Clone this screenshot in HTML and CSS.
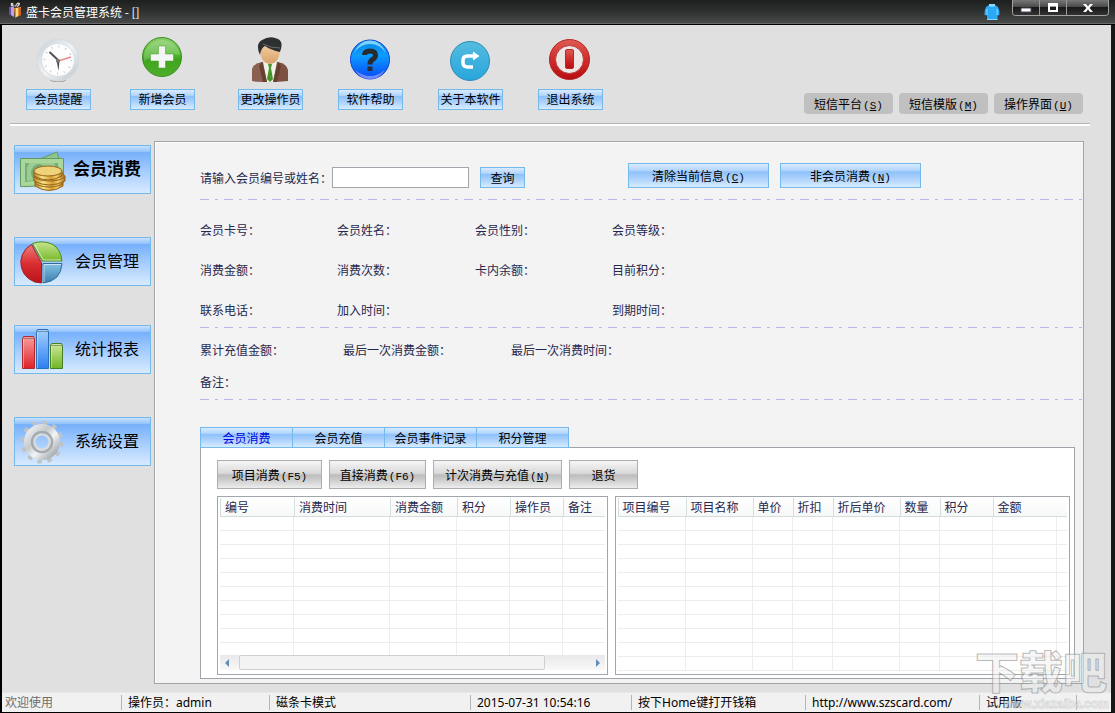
FILE: index.html
```html
<!DOCTYPE html>
<html lang="zh-CN">
<head>
<meta charset="utf-8">
<title>盛卡会员管理系统</title>
<link rel="stylesheet" href="styles.css">
</head>
<body>
<header class="titlebar">
  <svg class="app-icon" width="14" height="18" viewBox="0 0 14 18"><path d="M3 5Q2 1 5 2L7 5Q9 0 12 2Q12 5 9 6Z" fill="#d8d8d8"/><path d="M5 3l2 3M10 3L8 6" stroke="#444"/><path d="M1 6L5 5V16L1 13Z" fill="#6c4bb0"/><path d="M3 6L6 5.500V16L3 14Z" fill="#b9a4dc"/><path d="M6 7L13 6V14L7 17Z" fill="#e8862a"/><path d="M8 7L10 7V15L8 16Z" fill="#ffd98a"/><path d="M12 7V14" stroke="#b5421b"/></svg>
  <h1 class="title">盛卡会员管理系统 - []</h1>
  <svg class="shirt" width="16" height="17" viewBox="0 0 16 17"><path d="M5 1H11L14 3Q16 7 15.500 11L13.500 11.500V16H3V11.500L.5 11Q0 7 2 3Z" fill="#2aa9f5"/><path d="M5 0H11V2Q8 4 5 2Z" fill="#8ad4ff"/><path d="M3 5V11M13.200 5V11" stroke="#8ed5ff"/><path d="M3 15.500H13.500" stroke="#8ed5ff"/></svg>
  <div class="controls">
    <button class="ctl" aria-label="最小化"><svg width="12" height="12" viewBox="0 0 12 12"><path d="M1 6H11V10H1Z" fill="#fff" stroke="#444b5a"/></svg></button>
    <button class="ctl" aria-label="最大化"><svg width="12" height="12" viewBox="0 0 12 12"><path d="M2 2H10V9H2Z" fill="none" stroke="#fff" stroke-width="2"/><path d="M2 3H10" stroke="#fff" stroke-width="3"/></svg></button>
    <button class="ctl ctl-close" aria-label="关闭"><svg width="12" height="12" viewBox="0 0 12 12"><path d="M1 2H4L6 4.500L8 2H11L7.600 6L11 10H8L6 7.500L4 10H1L4.400 6Z" fill="#fff"/></svg></button>
  </div>
</header>

<div class="window">
  <div class="toolbar">
    <button class="tool">
      <svg width="47" height="48" viewBox="0 0 47 48"><defs><linearGradient id="ring" x1="0" y1="0" x2="1" y2="1"><stop offset="0" stop-color="#c3ccd4"/><stop offset="0.500" stop-color="#f1f4f6"/><stop offset="1" stop-color="#bac3ca"/></linearGradient></defs><ellipse cx="23" cy="44" rx="8" ry="2" fill="#999"/><circle cx="23" cy="24" r="21" fill="url(#ring)" stroke="#d5dbdf"/><circle cx="23" cy="24" r="16.500" fill="#fdfdfd" stroke="#d7dde2"/><circle cx="23" cy="24" r="13.500" fill="none" stroke="#c4c8cc" stroke-width="2" stroke-dasharray="1 6.070"/><path d="M14.500 16L23 24" stroke="#555" stroke-width="2"/><path d="M21.500 24H24.500L23.500 35Z" fill="#444"/><path d="M23 25L36 21" stroke="#e98c88" stroke-width="1.500"/><circle cx="23" cy="25" r="2" fill="#777"/></svg>
      <span class="tool-label">会员提醒</span>
    </button>
    <button class="tool">
      <svg width="47" height="48" viewBox="0 0 47 48"><defs><linearGradient id="green" x1="0" y1="0" x2="0" y2="1"><stop offset="0" stop-color="#8bd06a"/><stop offset="0.450" stop-color="#4fb52c"/><stop offset="0.550" stop-color="#3ea51c"/><stop offset="1" stop-color="#4fae2a"/></linearGradient></defs><circle cx="23" cy="21" r="19.500" fill="url(#green)" stroke="#3c8e22"/><path d="M5 19Q8 5 23 4Q38 5 41 19Q23 15 5 25Z" fill="#fff" opacity=".2"/><path d="M19.500 10H26.500V18H34.500V25H26.500V32H19.500V25H11.500V18H19.500Z" fill="#f4f6f3" stroke="#49983a" stroke-width=".5"/></svg>
      <span class="tool-label">新增会员</span>
    </button>
    <button class="tool tool-wide">
      <svg width="47" height="48" viewBox="1 0 47 48"><defs><linearGradient id="skin" x1="0" y1="0" x2="0" y2="1"><stop offset="0" stop-color="#f5d2a4"/><stop offset="1" stop-color="#d8a36b"/></linearGradient></defs><path d="M6 45V34Q7 28 16 26H32Q41 28 42 34V45Q24 47 6 45Z" fill="#7c5140"/><path d="M6 45V34Q7 28 14 27L18 46Z" fill="#8c6050"/><path d="M17 26H31L27 46H21Z" fill="#eef3e8"/><path d="M22 28H26L25 32L27 43L24 46L21 43L23 32Z" fill="#47952a"/><path d="M16 26L21 46H17L13 30ZM32 26L27 46H31L35 30Z" fill="#674032"/><path d="M14 12Q14 27 24 28Q34 27 34 12L28 6H18Z" fill="url(#skin)"/><path d="M14 19Q9 8 16 4Q24-1 32 3Q38 6 34 16Q25 14 19 10Q15 12 14 19Z" fill="#2d3031"/><path d="M17 8Q24 12 34 12" stroke="#6a6d6e" fill="none"/></svg>
      <span class="tool-label">更改操作员</span>
    </button>
    <button class="tool">
      <svg width="47" height="48" viewBox="1 0 47 48"><defs><linearGradient id="blue" x1="0" y1="0" x2="0" y2="1"><stop offset="0" stop-color="#0a86e2"/><stop offset="0.400" stop-color="#0c9cff"/><stop offset="1" stop-color="#0947f5"/></linearGradient></defs><circle cx="24" cy="23.500" r="19.500" fill="url(#blue)" stroke="#1240d0"/><path d="M8 17Q14 4 24 4.500Q34 4 40 17Q34 8 24 8Q14 8 8 17Z" fill="#7ad2ff"/><path d="M9 34Q24 46 39 34Q34 43 24 43Q14 43 9 34Z" fill="#6f8bff"/><path d="M18.500 19Q18.500 15 24 15Q29.500 15 29.500 19Q29.500 22 26.500 23.500Q24 25 24 28.500" stroke="#282c30" stroke-width="5" fill="none"/><path d="M21.500 30.500H26.500V35H21.500Z" fill="#282c30"/></svg>
      <span class="tool-label">软件帮助</span>
    </button>
    <button class="tool">
      <svg width="47" height="48" viewBox="1 0 47 48"><defs><linearGradient id="cyan" x1="0" y1="0" x2="0" y2="1"><stop offset="0" stop-color="#55bbdf"/><stop offset="1" stop-color="#28a6dc"/></linearGradient></defs><circle cx="24" cy="25" r="19.500" fill="url(#cyan)" stroke="#2d8db8"/><path d="M27 31H21.500Q17 31 17 26.500V24.500Q17 20 21.500 20H28" stroke="#fff" stroke-width="3.500" fill="none"/><path d="M27 15.500L33.500 20L27 24.500Z" fill="#fff"/></svg>
      <span class="tool-label">关于本软件</span>
    </button>
    <button class="tool">
      <svg width="47" height="48" viewBox="1 0 47 48"><defs><linearGradient id="red" x1="0" y1="0" x2="0" y2="1"><stop offset="0" stop-color="#e05a55"/><stop offset="0.500" stop-color="#d02c2b"/><stop offset="1" stop-color="#b80d10"/></linearGradient></defs><circle cx="23.500" cy="23.500" r="20" fill="url(#red)" stroke="#b12422"/><circle cx="23.500" cy="23.500" r="14" fill="#eee6e5" stroke="#b03535"/><rect x="19.500" y="13.500" width="8" height="19" rx="1.500" fill="url(#red)" stroke="#b32a29"/></svg>
      <span class="tool-label">退出系统</span>
    </button>
    <div class="toolbar-right">
      <button class="pill">短信平台<span class="key">(<u>S</u>)</span></button>
      <button class="pill">短信模版<span class="key">(<u>M</u>)</span></button>
      <button class="pill">操作界面<span class="key">(<u>U</u>)</span></button>
    </div>
  </div>

  <div class="body">
    <nav class="side">
      <button class="side-btn active">
        <svg width="48" height="44" viewBox="0 0 48 44"><defs><linearGradient id="gold" x1="0" y1="0" x2="1" y2="0"><stop offset="0" stop-color="#b98424"/><stop offset="0.300" stop-color="#fbe48b"/><stop offset="0.600" stop-color="#d69d34"/><stop offset="0.800" stop-color="#f3cf6c"/><stop offset="1" stop-color="#a87420"/></linearGradient></defs><path d="M18 12L38 4L42 18V30H20Z" fill="#8fc48e" stroke="#5f9a63"/><path d="M1.500 10.500H44.500V34Q20 39 1.500 38.500Z" fill="#a8d69b" stroke="#609b61"/><path d="M6 15H39V30L6 34Z" fill="#79ad76"/><path d="M10 15H35L37 19V29L8 33V20Z" fill="#9bcc91"/><ellipse cx="20" cy="25" rx="8" ry="9" fill="#78aa75"/><g stroke="#946518" fill="url(#gold)"><path d="M16 34V38Q30 47 44 38V34Z"/><ellipse cx="30" cy="34" rx="14" ry="5"/><path d="M15 28V33Q30 41 46 33V28Z"/><ellipse cx="30.500" cy="28" rx="15" ry="5"/><path d="M15 23V28Q29 36 43 28V23Z"/><ellipse cx="29" cy="23" rx="14" ry="5" fill="#efd37b"/></g></svg>
        <span class="side-text">会员消费</span>
      </button>
      <button class="side-btn">
        <svg width="48" height="44" viewBox="0 0 48 44"><defs><linearGradient id="pr" x1="0" y1="0" x2="0" y2="1"><stop offset="0" stop-color="#ef7b78"/><stop offset="0.500" stop-color="#d92d31"/><stop offset="1" stop-color="#b9141b"/></linearGradient><linearGradient id="pg" x1="0" y1="0" x2="0" y2="1"><stop offset="0" stop-color="#c4e58c"/><stop offset="1" stop-color="#78b92a"/></linearGradient><linearGradient id="pb" x1="0" y1="0" x2="0" y2="1"><stop offset="0" stop-color="#82c2e4"/><stop offset="1" stop-color="#3d80b0"/></linearGradient></defs><path d="M22.500 23L12.500 4.500A20.500 20.500 0 0 0 22.500 43Z" fill="url(#pr)" stroke="#a31f24"/><path d="M23 21L13.500 3.500Q23 0 33 4Q42 9 43 21Z" fill="url(#pg)" stroke="#4c8a20"/><path d="M24 23.500H43Q42 41 24 43Z" fill="url(#pb)" stroke="#2d6d98"/><path d="M15.500 4.500L24.500 20H42M25 42V24.500H42" stroke="#fff" opacity=".6" fill="none"/></svg>
        <span class="side-text">会员管理</span>
      </button>
      <button class="side-btn side-near">
        <svg width="48" height="44" viewBox="0 0 48 44"><defs><linearGradient id="br" x1="0" y1="0" x2="0" y2="1"><stop offset="0" stop-color="#f7a09d"/><stop offset="1" stop-color="#e02025"/></linearGradient><linearGradient id="bb" x1="0" y1="0" x2="0" y2="1"><stop offset="0" stop-color="#a5d0ff"/><stop offset="1" stop-color="#2c7ff0"/></linearGradient><linearGradient id="bg" x1="0" y1="0" x2="0" y2="1"><stop offset="0" stop-color="#cde89c"/><stop offset="1" stop-color="#72b524"/></linearGradient></defs><path d="M3.500 10.500L4.500 8.500H14.500L15.500 10.500V40.500H3.500Z" fill="url(#br)" stroke="#b22a30"/><path d="M17.500 3.500L18.500 1.500H28.500L29.500 3.500V40.500H17.500Z" fill="url(#bb)" stroke="#2b70ba"/><path d="M31.500 17.500L32.500 15.500H42.500L43.500 17.500V40.500H31.500Z" fill="url(#bg)" stroke="#477f28"/><path d="M4 10.500H15M18 3.500H29M32 17.500H43" stroke="#555" opacity=".5"/><path d="M4.500 11V40M18.500 4V40M32.500 18V40" stroke="#fff" opacity=".4"/></svg>
        <span class="side-text">统计报表</span>
      </button>
      <button class="side-btn">
        <svg width="48" height="44" viewBox="0 0 48 44"><defs><linearGradient id="steel" x1="0" y1="0" x2="1" y2="1"><stop offset="0" stop-color="#e9ebed"/><stop offset="0.350" stop-color="#c5c9cc"/><stop offset="0.600" stop-color="#f3f4f5"/><stop offset="1" stop-color="#a9aeb3"/></linearGradient></defs><g fill="none"><circle cx="23" cy="22" r="19.500" stroke="#bfc3c6" stroke-width="4" stroke-dasharray="4.500 5.710"/><circle cx="23" cy="22" r="12.500" stroke="url(#steel)" stroke-width="11"/><circle cx="23" cy="22" r="10" stroke="#a6abb0" stroke-width="2.500"/><circle cx="23" cy="22" r="7.500" stroke="#d9dcdf" stroke-width="2"/></g></svg>
        <span class="side-text">系统设置</span>
      </button>
    </nav>

    <main class="panel">
      <form class="search">
        <label for="member">请输入会员编号或姓名：</label>
        <input id="member" class="field" type="text">
        <button type="button" class="blue query">查询</button>
        <button type="button" class="blue action first">清除当前信息<span class="key">(<u>C</u>)</span></button>
        <button type="button" class="blue action">非会员消费<span class="key">(<u>N</u>)</span></button>
      </form>
      <div class="dash"></div>
      <div class="info">
        <span>会员卡号：</span><span>会员姓名：</span><span>会员性别：</span><span>会员等级：</span>
        <span>消费金额：</span><span>消费次数：</span><span>卡内余额：</span><span>目前积分：</span>
        <span>联系电话：</span><span>加入时间：</span><span></span><span>到期时间：</span>
      </div>
      <div class="dash"></div>
      <div class="totals">
        <span class="total-a">累计充值金额：</span><span class="total-b">最后一次消费金额：</span><span>最后一次消费时间：</span>
      </div>
      <div class="remark">备注：</div>
      <div class="dash"></div>

      <div class="tabs">
        <button class="tab selected">会员消费</button><button class="tab">会员充值</button><button class="tab">会员事件记录</button><button class="tab">积分管理</button>
      </div>
      <section class="tab-panel">
        <div class="actions">
          <button class="gray w105">项目消费<span class="key">(F5)</span></button>
          <button class="gray w97">直接消费<span class="key">(F6)</span></button>
          <button class="gray w129">计次消费与充值<span class="key">(<u>N</u>)</span></button>
          <button class="gray w69">退货</button>
        </div>
        <div class="grids">
          <div class="grid grid-left">
            <table>
              <colgroup><col class="c74"><col class="c96"><col class="c67"><col class="c53"><col class="c53"><col></colgroup>
              <thead><tr><th>编号</th><th>消费时间</th><th>消费金额</th><th>积分</th><th>操作员</th><th>备注</th></tr></thead>
              <tbody>
                <tr><td></td><td></td><td></td><td></td><td></td><td></td></tr>
                <tr><td></td><td></td><td></td><td></td><td></td><td></td></tr>
                <tr><td></td><td></td><td></td><td></td><td></td><td></td></tr>
                <tr><td></td><td></td><td></td><td></td><td></td><td></td></tr>
                <tr><td></td><td></td><td></td><td></td><td></td><td></td></tr>
                <tr><td></td><td></td><td></td><td></td><td></td><td></td></tr>
                <tr><td></td><td></td><td></td><td></td><td></td><td></td></tr>
                <tr><td></td><td></td><td></td><td></td><td></td><td></td></tr>
                <tr><td></td><td></td><td></td><td></td><td></td><td></td></tr>
                <tr class="cut"><td></td><td></td><td></td><td></td><td></td><td></td></tr>
              </tbody>
            </table>
            <div class="scroll">
              <svg width="19" height="14" viewBox="0 0 19 14"><path d="M9 3V11L5 7Z" fill="#5f8fb9"/></svg>
              <div class="track"><div class="thumb"></div></div>
              <svg width="18" height="14" viewBox="0 0 18 14"><path d="M9 3V11L13 7Z" fill="#5f8fb9"/></svg>
            </div>
          </div>
          <div class="grid grid-right">
            <table>
              <colgroup><col class="c68"><col class="c67"><col class="c40"><col class="c40"><col class="c67"><col class="c40"><col class="c53"><col><col class="c10"></colgroup>
              <thead><tr><th>项目编号</th><th>项目名称</th><th>单价</th><th>折扣</th><th>折后单价</th><th>数量</th><th>积分</th><th colspan="2">金额</th></tr></thead>
              <tbody>
                <tr><td></td><td></td><td></td><td></td><td></td><td></td><td></td><td></td><td></td></tr>
                <tr><td></td><td></td><td></td><td></td><td></td><td></td><td></td><td></td><td></td></tr>
                <tr><td></td><td></td><td></td><td></td><td></td><td></td><td></td><td></td><td></td></tr>
                <tr><td></td><td></td><td></td><td></td><td></td><td></td><td></td><td></td><td></td></tr>
                <tr><td></td><td></td><td></td><td></td><td></td><td></td><td></td><td></td><td></td></tr>
                <tr><td></td><td></td><td></td><td></td><td></td><td></td><td></td><td></td><td></td></tr>
                <tr><td></td><td></td><td></td><td></td><td></td><td></td><td></td><td></td><td></td></tr>
                <tr><td></td><td></td><td></td><td></td><td></td><td></td><td></td><td></td><td></td></tr>
                <tr><td></td><td></td><td></td><td></td><td></td><td></td><td></td><td></td><td></td></tr>
                <tr><td></td><td></td><td></td><td></td><td></td><td></td><td></td><td></td><td></td></tr>
                <tr><td></td><td></td><td></td><td></td><td></td><td></td><td></td><td></td><td></td></tr>
              </tbody>
            </table>
          </div>
        </div>
      </section>
    </main>
  </div>

  <footer class="status">
    <span class="muted s119">欢迎使用</span>
    <span class="s148">操作员：admin</span>
    <span class="grow">磁条卡模式</span>
    <span class="s161">2015-07-31 10:54:16</span>
    <span class="s174">按下Home键打开钱箱</span>
    <span class="s174">http://www.szscard.com/</span>
    <span class="s97">试用版</span>
    <span class="s35"></span>
  </footer>
</div>
<div class="mark"><div class="mark-name">下载吧</div><div class="mark-url">www.xiazaiba.com</div></div>
</body>
</html>
```

FILE: styles.css
```css
* { box-sizing: border-box; }
body {
  margin: 0;
  min-height: 100vh;
  display: flex;
  flex-direction: column;
  position: relative;
  overflow-x: hidden;
  background: #000;
  font: 12px/20px "Noto Sans CJK SC", sans-serif;
  color: #000;
}
button {
  font: inherit;
  color: inherit;
  margin: 0;
  padding: 0;
  border: 0;
  background: none;
  white-space: nowrap;
}
svg { display: block; flex: none; }
.key { font: 11px/12px "Liberation Mono", monospace; margin-left: 1px; }

.titlebar {
  height: 25px;
  display: flex;
  align-items: flex-start;
  padding: 0 6px 0 8px;
  border-bottom: 1px solid #000;
  box-shadow: inset 0 -1px #6a6a6a;
  background: linear-gradient(#1d1e1e, #303232 50%, #4a4c4c);
}
.app-icon { margin-top: 1px; }
.title {
  flex: 1;
  margin: 2px 0 0 4px;
  font-size: 12px;
  font-weight: 400;
  line-height: 20px;
  color: #fff;
}
.shirt { margin: 4px 12px 0 0; }
.controls {
  display: flex;
  height: 16px;
  border: 1px solid #a2a2a2;
  border-top: 0;
  border-radius: 0 0 4px 4px;
  overflow: hidden;
}
.ctl {
  width: 27px;
  display: flex;
  align-items: center;
  justify-content: center;
  background: linear-gradient(#777, #4a4a4a 45%, #181818 50%, #333);
  border-right: 1px solid #999;
}
.ctl-close { width: 41px; border-right: 0; }

.window {
  flex: 1;
  display: flex;
  flex-direction: column;
  background: #e0e0e0;
  border: solid #000;
  border-width: 0 4px 2px 2px;
  border-right-color: #161818;
}
.toolbar {
  display: flex;
  align-items: flex-start;
  gap: 35px;
  margin: 0 21px 0 8px;
  padding: 11px 7px 10px 16px;
  border-bottom: 2px solid #fff;
  box-shadow: inset 0 -1px #b5b5b5;
}
.tool {
  display: flex;
  flex-direction: column;
  align-items: center;
  gap: 5px;
}
.tool:nth-child(2) { margin-left: 4px; }
.tool-wide { margin-left: 8px; }
.tool-label, .blue, .tab {
  border: 1px solid #74b9ea;
  background: linear-gradient(#d9ebff, #b3d5fc 28%, #8fc1fb 34%, #a9cffc 60%, #d6ecff);
}
.tool-label { width: 65px; height: 21px; line-height: 18px; text-align: center; }
.toolbar-right { flex: 1; display: flex; justify-content: flex-end; gap: 6px; padding-top: 57px; }
.pill { width: 89px; height: 21px; line-height: 20px; border-radius: 4px; background: #c0c0c0; }

.body { flex: 1; display: flex; padding: 15px 27px 9px 12px; }
.side { width: 137px; margin: 4px 3px 0 0; display: flex; flex-direction: column; gap: 43px; flex: none; }
.side-btn {
  height: 49px;
  display: flex;
  align-items: center;
  padding-left: 4px;
  gap: 8px;
  border: 1px solid #74b9ea;
  background: linear-gradient(#c9e1fd, #8fc0fb 13%, #76b0fb 14%, #a8cefd 55%, #d8eaff);
  font-size: 16px;
}
.side-text { padding-bottom: 3px; }
.side-near { margin-top: -4px; }
.active { font-size: 17px; font-weight: 700; gap: 6px; }

.panel {
  flex: 1;
  min-width: 0;
  padding: 21px 0 4px 45px;
  border: 1px solid #a0a4a8;
  background: #f3f3f3;
  box-shadow: inset 1px 1px #fff;
  color: #28284e;
}
.search { display: flex; align-items: flex-end; height: 25px; }
.search label { width: 132px; white-space: nowrap; }
.field {
  width: 137px;
  height: 21px;
  padding: 0 4px;
  border: 1px solid #a0a6ac;
  background: #fff;
  font: inherit;
}
.blue { color: #000; }
.query { width: 45px; height: 21px; margin-left: 11px; line-height: 18px; }
.action { width: 141px; height: 25px; margin-left: 11px; line-height: 22px; }
.action.first { margin-left: 103px; }
.dash {
  height: 1px;
  margin-top: 7px;
  background: repeating-linear-gradient(90deg, #b8b8ee 0 9px, transparent 9px 15px, #b8b8ee 15px 18px, transparent 18px 24px);
}
.search + .dash { margin-top: 11px; }
.info {
  display: grid;
  grid-template-columns: 137px 138px 137px 1fr;
  grid-auto-rows: 20px;
  gap: 20px 0;
  padding-top: 20px;
}
.totals { display: flex; padding: 12px 0; }
.total-a { width: 143px; }
.total-b { width: 168px; }
.tabs { display: flex; margin-top: 27px; }
.tab { width: 93px; height: 21px; margin-right: -1px; line-height: 18px; color: #000; position: relative; }
.selected { color: #0000e0; }
.tab-panel {
  margin: -1px 8px 0 0;
  padding: 12px 4px 3px 16px;
  border: 1px solid #a0a4aa;
  background: #fff;
}
.actions { display: flex; gap: 7px; margin-bottom: 7px; }
.gray {
  height: 29px;
  line-height: 26px;
  color: #000;
  border: 1px solid #adadad;
  background: linear-gradient(#f6f6f6, #d9d9d9 45%, #bdbdbd 52%, #d2d2d2 75%, #ededed);
}
.w105 { width: 105px; }
.w97 { width: 97px; }
.w129 { width: 129px; }
.w69 { width: 69px; }
.grids { display: flex; gap: 7px; }
.grid { min-width: 0; border: 1px solid #a0a6ac; padding: 1px 2px; }
.grid-left { flex: 391 1 0; }
.grid-right { flex: 457 1 0; }
table { width: 100%; table-layout: fixed; border-collapse: separate; border-spacing: 0; }
th {
  height: 19px;
  padding: 0 0 0 4px;
  line-height: 18px;
  font-weight: 400;
  text-align: left;
  white-space: nowrap;
  background: linear-gradient(#fff, #f7f8f8);
  border-bottom: 1px solid #d5dcdc;
  border-left: 1px solid #d5dede;
}
td { height: 14px; padding: 0; border: solid #ededed; border-width: 0 1px 1px 0; }
td:last-child { border-right: 0; }
.cut td { height: 12px; border-bottom: 0; }
.c74 { width: 74px; }
.c96 { width: 96px; }
.c67 { width: 67px; }
.c68 { width: 68px; }
.c53 { width: 53px; }
.c40 { width: 40px; }
.c10 { width: 10px; }
.scroll { display: flex; height: 15px; margin-bottom: 3px; align-items: center; background: linear-gradient(#e9e9e9, #f8f8f8); }
.track { flex: 1; }
.thumb { width: 88%; height: 15px; border: 1px solid #cfcfcf; border-radius: 2px; background: #f3f3f3; }

.status {
  display: flex;
  align-items: center;
  height: 19px;
  background: #f1f1f1;
  font-family: "Noto Sans", "Noto Sans CJK SC", sans-serif;
  box-shadow: 0 -1px #e8e8e8;
}
.status span { height: 15px; line-height: 15px; padding-left: 6px; white-space: nowrap; border-left: 1px solid #b5b5b5; }
.status .muted { color: #6d6d6d; padding-left: 3px; border-left: 0; }
.grow { flex: 1; }
.s119 { width: 119px; }
.s148 { width: 148px; }
.s161 { width: 161px; }
.s174 { width: 174px; }
.s97 { width: 97px; }
.s35 { width: 35px; }

.mark { position: absolute; right: 6px; bottom: 2px; width: 134px; pointer-events: none; white-space: nowrap; }
.mark-name {
  margin-bottom: 4px;
  font-size: 44px;
  font-weight: 900;
  line-height: 44px;
  color: rgba(240, 240, 240, .55);
  -webkit-text-stroke: 1px rgba(130, 130, 130, .55);
}
.mark-url {
  font: 700 12px/16px "Liberation Sans", sans-serif;
  text-align: right;
  color: rgba(255, 255, 255, .6);
  -webkit-text-stroke: 1px rgba(150, 150, 150, .3);
}
```
